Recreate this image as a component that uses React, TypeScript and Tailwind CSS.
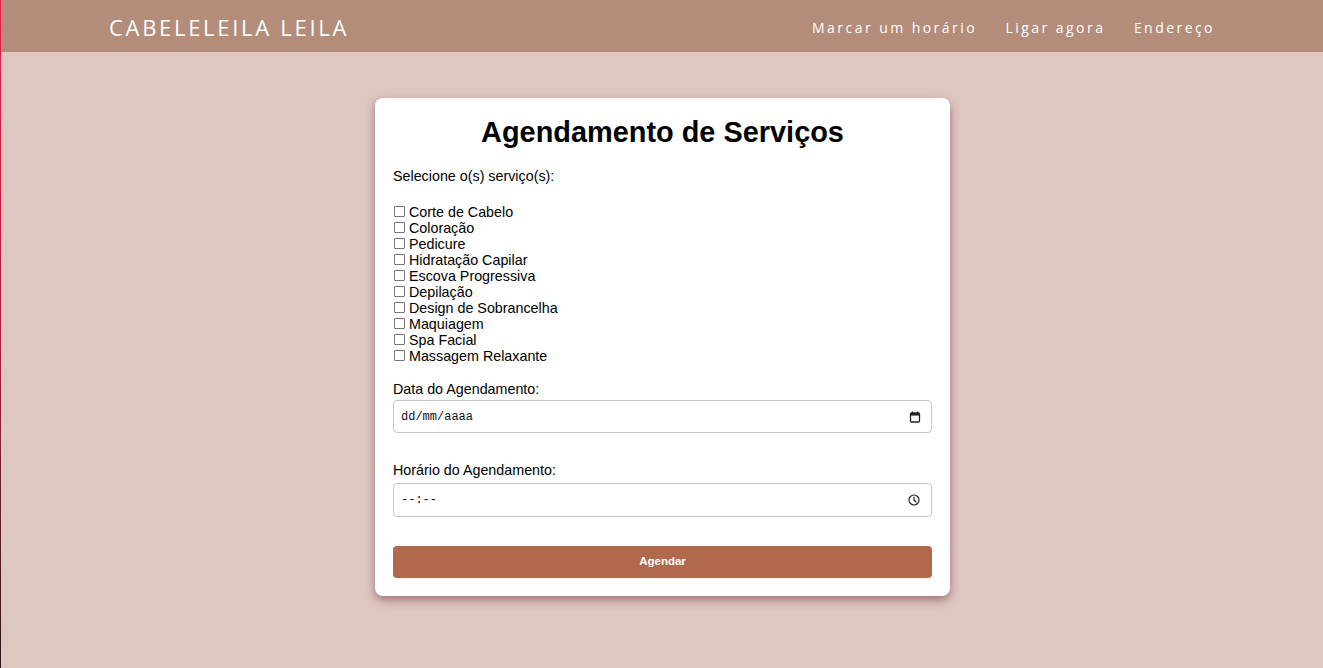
import React from "react";

const services = [
  "Corte de Cabelo",
  "Coloração",
  "Pedicure",
  "Hidratação Capilar",
  "Escova Progressiva",
  "Depilação",
  "Design de Sobrancelha",
  "Maquiagem",
  "Spa Facial",
  "Massagem Relaxante",
];

function CalendarIcon() {
  return (
    <svg width="12" height="12" viewBox="0 0 12 12" fill="none">
      <rect x="1.5" y="2" width="9" height="9" rx="1" stroke="#222" strokeWidth="1.3" />
      <rect x="1.5" y="2" width="9" height="2.6" fill="#222" />
      <line x1="3.5" y1="0.5" x2="3.5" y2="2.5" stroke="#222" strokeWidth="1.2" />
      <line x1="8.5" y1="0.5" x2="8.5" y2="2.5" stroke="#222" strokeWidth="1.2" />
    </svg>
  );
}

function ClockIcon() {
  return (
    <svg width="12" height="12" viewBox="0 0 12 12" fill="none">
      <circle cx="6" cy="6" r="5" stroke="#222" strokeWidth="1.2" />
      <path d="M6 3v3.2l2 1.6" stroke="#222" strokeWidth="1.2" strokeLinecap="round" />
    </svg>
  );
}

export default function App() {
  return (
    <div className="flex min-h-[668px] w-full bg-[#dfc7c1]">
      <div className="w-px shrink-0 bg-gradient-to-b from-[#e8204a] via-[#b0203c] to-[#2a1418]" />
      <div className="flex-1 flex flex-col">
        <header className="h-[52px] bg-[#b38c7a] flex items-center justify-between pl-[108px] pr-[108px] pt-[2px]">
          <div
            className="text-white text-[22px] tracking-[2.7px] leading-none"
            style={{ fontFamily: '"Open Sans", "Noto Sans", sans-serif' }}
          >
            CABELELEILA LEILA
          </div>
          <nav
            className="flex gap-[28.5px] text-white text-[14px] tracking-[2.45px]"
            style={{ fontFamily: '"Open Sans", "Noto Sans", sans-serif' }}
          >
            <span>Marcar um horário</span>
            <span>Ligar agora</span>
            <span>Endereço</span>
          </nav>
        </header>

        <main className="flex justify-center pt-[46px] pb-[70px] pl-[1px]">
          <div
            className="w-[575px] bg-white rounded-[8px] shadow-[0_4px_10px_rgba(110,50,50,0.55)] px-[18px] pt-[18px] pb-[18px] text-black"
            style={{ fontFamily: '"Liberation Sans", Arial, sans-serif' }}
          >
            <h2 className="text-center text-[28.9px] font-bold leading-[32px]">Agendamento de Serviços</h2>
            <div className="mt-[20px] text-[14.3px] leading-[16px]">Selecione o(s) serviço(s):</div>
            <div className="mt-[20px] flex flex-col">
              {services.map((s) => (
                <label key={s} className="flex items-center h-[16px] text-[14.3px] leading-[16px]">
                  <span className="w-[11px] h-[11px] border border-[#767676] rounded-[1px] bg-white ml-[1px] mr-[4px] mb-[2px]" />
                  <span>{s}</span>
                </label>
              ))}
            </div>
            <div className="mt-[17px] text-[14.3px] leading-[16px]">Data do Agendamento:</div>
            <div className="mt-[3px] h-[33px] border border-[#c8c8c8] rounded-[4px] flex items-center justify-between pl-[7px] pr-[10px]">
              <span
                className="text-[12px] text-[#111]"
                style={{ fontFamily: '"Liberation Mono", "DejaVu Sans Mono", monospace' }}
              >
                dd/mm/aaaa
              </span>
              <CalendarIcon />
            </div>
            <div className="mt-[29px] text-[14.3px] leading-[16px]">Horário do Agendamento:</div>
            <div className="mt-[5px] h-[34px] border border-[#c8c8c8] rounded-[4px] flex items-center justify-between pl-[7px] pr-[11px]">
              <span
                className="text-[12px] text-[#111]"
                style={{ fontFamily: '"Liberation Mono", "DejaVu Sans Mono", monospace' }}
              >
                --:--
              </span>
              <ClockIcon />
            </div>
            <button className="mt-[29px] w-full h-[32px] rounded-[4px] bg-[#b0694b] text-white text-[11.5px] font-bold">
              Agendar
            </button>
          </div>
        </main>
      </div>
    </div>
  );
}
